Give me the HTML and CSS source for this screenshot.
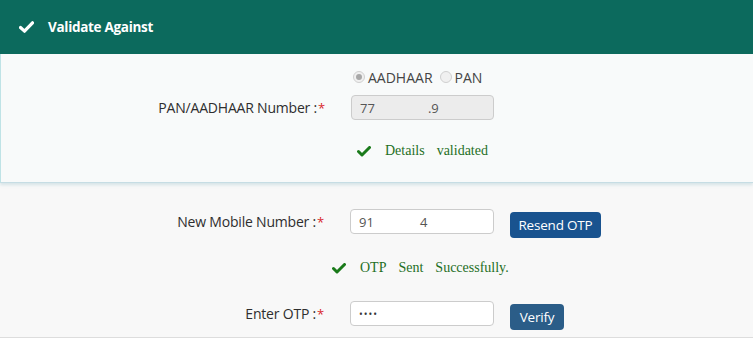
FILE: index.html
```html
<!DOCTYPE html>
<html>
<head>
<meta charset="utf-8">
<link rel="stylesheet" href="styles.css">
</head>
<body>
<div class="panel">
  <div class="panel-head">
    <svg class="head-check" width="15" height="12" viewBox="0 0 15 12"><path d="M1.5 6.5 L5.5 10.2 L13.5 1.8" fill="none" stroke="#fff" stroke-width="3.2" stroke-linecap="round" stroke-linejoin="round"/></svg>
    <span class="head-title">Validate Against</span>
  </div>
  <div class="panel-body">
    <div class="row radios">
      <div class="lbl"></div>
      <div class="ctl">
        <span class="radio checked"></span><span class="rtext">AADHAAR</span>
        <span class="radio"></span><span class="rtext">PAN</span>
      </div>
    </div>
    <div class="row r-num">
      <div class="lbl">PAN/AADHAAR Number :<span class="req">*</span></div>
      <div class="ctl"><div class="input disabled"><span>77</span><span class="gap1"></span><span>.9</span></div></div>
    </div>
    <div class="row r-msg1">
      <div class="lbl"></div>
      <div class="ctl msg indent">
        <svg class="ok" width="14" height="11" viewBox="0 0 14 11"><path d="M1.5 5.5 L5 9 L12.5 1.5" fill="none" stroke="#1a7a1a" stroke-width="3" stroke-linecap="round" stroke-linejoin="round"/></svg>
        <span>Details</span><span class="sp"></span><span>validated</span>
      </div>
    </div>
  </div>
</div>
<div class="section">
  <div class="row r-mob">
    <div class="lbl">New Mobile Number :<span class="req">*</span></div>
    <div class="ctl">
      <div class="input"><span>91</span><span class="gap2"></span><span>4</span></div>
      <button class="btn btn-resend">Resend OTP</button>
    </div>
  </div>
  <div class="row r-msg2">
    <div class="lbl narrow"></div>
    <div class="ctl msg shift">
      <svg class="ok" width="14" height="11" viewBox="0 0 14 11"><path d="M1.5 5.5 L5 9 L12.5 1.5" fill="none" stroke="#1a7a1a" stroke-width="3" stroke-linecap="round" stroke-linejoin="round"/></svg>
      <span>OTP</span><span class="sp"></span><span>Sent</span><span class="sp"></span><span>Successfully.</span>
    </div>
  </div>
  <div class="row r-otp">
    <div class="lbl">Enter OTP :<span class="req">*</span></div>
    <div class="ctl">
      <div class="input"><span class="dots">••••</span></div>
      <button class="btn btn-verify">Verify</button>
    </div>
  </div>
</div>
</body>
</html>
```

FILE: styles.css
```css
* { box-sizing: border-box; }
html, body { margin: 0; padding: 0; }
body {
  width: 753px;
  height: 338px;
  overflow: hidden;
  background: #f8f8f8;
  font-family: "Open Sans", "Liberation Sans", sans-serif;
  font-size: 14px;
  color: #333;
}
.panel {
  border-left: 1px solid #bfe3e6;
  border-bottom: 1px solid #c6dde4;
  box-shadow: 0 2px 3px rgba(150, 190, 200, 0.35);
  background: #f8fafa;
}
.panel-head {
  height: 54px;
  background: #0c6a5d;
  display: flex;
  align-items: center;
  padding-left: 19px;
  margin-left: -1px;
}
.head-check { margin-right: 14px; margin-top: -1px; }
.head-title {
  color: #fff;
  font-weight: 700;
  font-size: 13.5px;
  letter-spacing: -0.3px;
}
.panel-body {
  padding-top: 13px;
  height: 128px;
}
.row {
  display: grid;
  grid-template-columns: 324px 1fr;
  column-gap: 26px;
  align-items: center;
}
.lbl {
  text-align: right;
  color: #2e2e2e;
  white-space: nowrap;
  letter-spacing: -0.2px;
}
.req { color: #d9262a; margin-left: 1px; font-size: 13px; }
.ctl { display: flex; align-items: center; }
.radios { height: 20px; }
.radio {
  width: 12px;
  height: 12px;
  border-radius: 50%;
  border: 1px solid #d0d0d0;
  background: #f0f0f0;
  display: inline-block;
  position: relative;
  margin-left: 2px;
}
.radio.checked::after {
  content: "";
  position: absolute;
  left: 2px; top: 2px;
  width: 6px; height: 6px;
  border-radius: 50%;
  background: #a8a8a8;
}
.rtext { margin-left: 3px; margin-right: 5px; color: #444; }
.r-num { margin-top: 8px; }
.input {
  width: 144px;
  height: 25px;
  border: 1px solid #ccc;
  border-radius: 4px;
  background: #fff;
  display: flex;
  align-items: center;
  padding-left: 8px;
  color: #555;
  font-size: 13px;
}
.input.disabled { background: #ececec; width: 143px; }
.gap1 { width: 53px; }
.gap2 { width: 46px; }
.dots { letter-spacing: 1px; font-size: 10px; color: #333; }
.r-msg1 { margin-top: 23px; }
.msg {
  font-family: "Liberation Serif", "Times New Roman", serif;
  font-size: 14px;
  color: #1f6f1f;
  letter-spacing: 0;
}
.indent { padding-left: 6px; }
.ok { margin-right: 14px; }
.sp { width: 12px; }
.section { padding-top: 22px; }
.btn {
  font-family: "Open Sans", "Liberation Sans", sans-serif;
  font-size: 13.5px;
  color: #fff;
  border: 0;
  border-radius: 4px;
  height: 26px;
  margin-left: 16px;
  margin-top: 7px;
  padding: 0;
  white-space: nowrap;
  letter-spacing: -0.2px;
}
.btn-resend { background: #19538f; width: 91px; }
.btn-verify { background: #2b5d88; width: 54px; }
.r-msg2 { margin-top: 22px; }
.shift { margin-left: -18px; }
.r-otp { margin-top: 21px; border-bottom: 2px solid #ddd; padding-bottom: 7px; }
```
